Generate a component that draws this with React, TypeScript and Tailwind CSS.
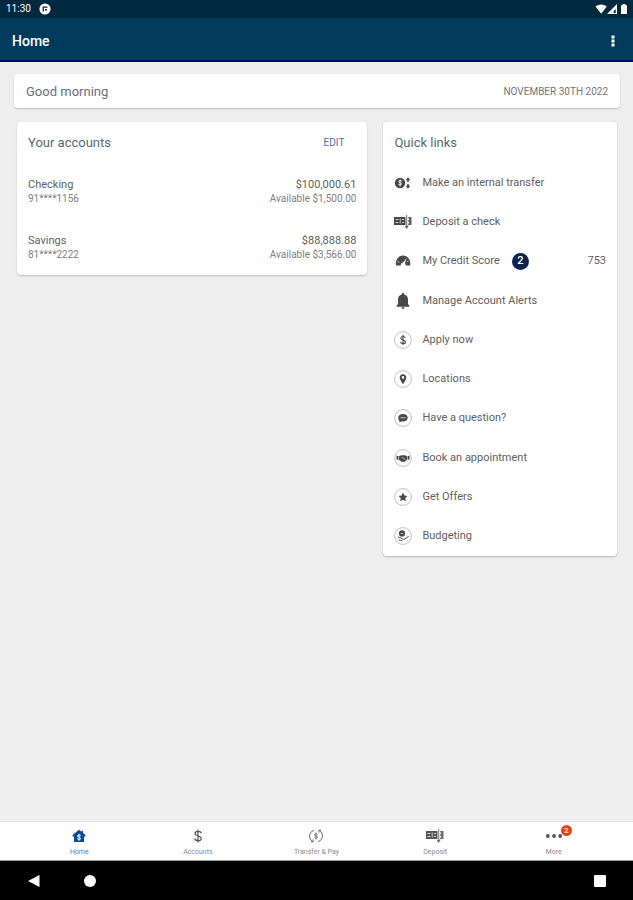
import React from "react";

type IconProps = { className?: string };

const CheckIcon = ({ className }: IconProps) => (
  <svg viewBox="0 0 18 14" className={className} fill="currentColor" aria-hidden="true">
    <path fillRule="evenodd" d="M0 2h11.500v8H0zM1.500 4.200v.8h3v-.8zM1.500 7v.8h3V7zM5.800 3.500v5h.7v-5zM8 4.200v.8h2v-.8zM8 7v.8h2V7z" />
    <path d="M12.300 0h.9v10.500h1.600L12.700 14l-2.100-3h1.700z" opacity="0.850" />
    <path d="M14.200 2H17.500v8h-3.300V8.500h.8V7H14.200V5H15V3.500h-.8z" opacity="0.850" />
  </svg>
);

const TransferIcon = ({ className }: IconProps) => (
  <svg viewBox="0 0 18 14" className={className} fill="currentColor" aria-hidden="true">
    <circle cx="6" cy="7" r="5.200" />
    <path d="M7.800 5.200C7 4.200 4.700 4.300 4.800 5.600c.1 1.300 2.700 1 2.700 2.300 0 1.200-2.400 1.200-3.200.2M6.100 3.500v7" fill="none" stroke="white" strokeWidth="0.900" />
    <path d="M14 1.200l2.400 3h-1.600v1.800h-1.600V4.200h-1.600zM14 12.800l-2.400-3h1.600V8h1.600v1.800h1.600z" />
  </svg>
);

const GaugeIcon = ({ className }: IconProps) => (
  <svg viewBox="0 0 18 14" className={className} fill="currentColor" aria-hidden="true">
    <path d="M2 11.500C1.200 6 4.300 1.500 9 1.500s8.200 4.500 7.200 10h-4.700c.3-1-.1-2-.7-2.500l2-5.300-3.700 4.700c-1.600.1-2.600 1.500-2.200 3.100z" />
    <path d="M3.500 7.500l2 .8M14.500 7l-1.800.9" stroke="white" strokeWidth="0.700" />
  </svg>
);

const BellIcon = ({ className }: IconProps) => (
  <svg viewBox="0 0 18 18" className={className} fill="currentColor" aria-hidden="true">
    <path d="M9 1c.9 0 1.300.6 1.300 1.500 2.400.6 3.700 2.400 3.700 5v4.500l1.500 2v.8h-13V14L4 12V7.500c0-2.600 1.300-4.400 3.700-5C7.700 1.600 8.100 1 9 1zM7.500 15.300h3c0 1-.5 1.600-1.500 1.600s-1.500-.6-1.500-1.600z" />
  </svg>
);

const dollarPath = "M11.400 6.700C10.700 5 6.800 5 6.800 7.200c0 2.300 4.700 1.300 4.700 3.700 0 2.300-4.400 2.100-5 .2M9 4v10";

const Ring = ({ children }: { children: React.ReactNode }) => (
  <svg viewBox="0 0 18 18" className="size-[18px]" fill="currentColor" aria-hidden="true">
    <circle cx="9" cy="9" r="8.400" fill="none" stroke="#b0b0b0" strokeWidth="0.800" />
    {children}
  </svg>
);

const links: { label: string; icon: React.ReactNode; badge?: string; value?: string }[] = [
  { label: "Make an internal transfer", icon: <TransferIcon className="h-3.5 w-[18px]" /> },
  { label: "Deposit a check", icon: <CheckIcon className="h-3.5 w-[18px]" /> },
  { label: "My Credit Score", icon: <GaugeIcon className="h-3.5 w-[18px]" />, badge: "2", value: "753" },
  { label: "Manage Account Alerts", icon: <BellIcon className="size-[18px]" /> },
  { label: "Apply now", icon: <Ring><path d={dollarPath} fill="none" stroke="currentColor" strokeWidth="1.100" /></Ring> },
  { label: "Locations", icon: <Ring><path fillRule="evenodd" d="M9 4.200c-2 0-3.300 1.400-3.300 3.200C5.700 9.600 9 14 9 14s3.300-4.400 3.300-6.600c0-1.800-1.300-3.200-3.300-3.200zm0 1.900a1.300 1.300 0 110 2.600 1.300 1.300 0 010-2.600z" /></Ring> },
  { label: "Have a question?", icon: <Ring><path d="M9 5c2.900 0 4.700 1.500 4.700 3.700S11.900 12.400 9 12.400H7.300L5.200 13.300l.2-1.700C4.600 11 4.300 10 4.300 8.700 4.300 6.500 6.100 5 9 5z" /><path d="M6.500 8.800h5" stroke="white" strokeWidth="0.700" /></Ring> },
  { label: "Book an appointment", icon: <Ring><path d="M2.500 6.500l2 .8L7.500 6.300h3.200l2.800 1 2-.8v4.300l-2-.2-2.700 2.200H7.500l-3-2.300-2 .2z" /><path d="M4.600 7.200v3.500M13.400 7.200v3.500M7.500 8.500l1.800.6 2.200 1.500" fill="none" stroke="white" strokeWidth="0.600" /></Ring> },
  { label: "Get Offers", icon: <Ring><path d="M9 4.600l1.400 2.900 3.100.4-2.300 2.200.6 3.200L9 11.800l-2.800 1.500.6-3.200-2.300-2.200 3.100-.4z" /></Ring> },
  { label: "Budgeting", icon: <Ring><circle cx="8" cy="6.400" r="3.100" /><path d="M6.700 6.400h2.600" stroke="white" strokeWidth="0.700" /><path d="M4 10.200c2.500-.2 3.500 1.600 6 2.200l4.600-3M4.500 12.800c1.500.2 2.500 1 4 1.200" fill="none" stroke="currentColor" strokeWidth="1" /></Ring> },
];

const accounts = [
  { name: "Checking", number: "91****1156", balance: "$100,000.61", available: "Available $1,500.00" },
  { name: "Savings", number: "81****2222", balance: "$88,888.88", available: "Available $3,566.00" },
];

const HomeIcon = () => (
  <svg viewBox="0 0 14 14" className="size-3.5" aria-hidden="true">
    <path d="M7 .8L.6 6v1.400H2V13h10V7.400h1.400V6L11 4V1.800H9.500v1z" fill="#0c4a93" />
    <path d="M8.800 6.600C8 5.600 5.500 5.700 5.500 7c0 1.500 3.200 1 3.200 2.500 0 1.400-2.700 1.300-3.400.1M7 5v6.800" fill="none" stroke="white" strokeWidth="1" />
  </svg>
);

const DollarIcon = () => (
  <svg viewBox="0 0 14 14" className="size-3.5" fill="none" stroke="currentColor" strokeWidth="1.200" aria-hidden="true">
    <path d="M10.300 4.300C9.700 1.700 4 1.700 4 4.600c0 3 6.300 1.700 6.300 4.900 0 3-6 2.700-6.600 0M7 .5v13" />
  </svg>
);

const CycleIcon = () => (
  <svg viewBox="0 0 14 14" className="size-3.5" fill="none" stroke="currentColor" strokeWidth="0.900" aria-hidden="true">
    <path d="M5 1.500C-.8 3-.5 10 3.600 12.500M1.800 12.800h2.300v-2.400M9 12.500c5.800-1.500 5.500-8.500 1.400-11M12.200 1.200H9.900v2.400" />
    <path d="M8.600 5.500C8 4.200 5.500 4.500 5.500 5.800c0 1.600 3.100.8 3.100 2.500 0 1.400-2.700 1.500-3.200.1M7 3.600v6.800" strokeWidth="0.800" />
  </svg>
);

const MoreIcon = () => (
  <svg viewBox="0 0 18 14" className="h-3.5 w-[18px]" fill="currentColor" aria-hidden="true">
    <circle cx="2.800" cy="7" r="1.900" />
    <circle cx="9" cy="7" r="1.900" />
    <circle cx="15.200" cy="7" r="1.900" />
  </svg>
);

const tabs = [
  { label: "Home", icon: <HomeIcon />, active: true },
  { label: "Accounts", icon: <DollarIcon /> },
  { label: "Transfer & Pay", icon: <CycleIcon /> },
  { label: "Deposit", icon: <CheckIcon className="h-3.5 w-[18px]" /> },
  { label: "More", icon: <MoreIcon />, badge: "2" },
];

export default function App() {
  return (
    <div className="flex min-h-screen flex-col bg-[#eeeeee] font-[Roboto,sans-serif] text-[#606060]">
      <div className="flex h-[18px] items-center justify-between bg-[#00283f] pr-1 pl-1.5 text-white">
        <div className="flex items-center gap-2">
          <span className="text-[10px] leading-3">11:30</span>
          <svg viewBox="0 0 12 12" className="size-3" aria-hidden="true">
            <circle cx="6" cy="6" r="5.600" fill="white" />
            <path d="M4.300 8.500V4.200h4.200" fill="none" stroke="#00283f" strokeWidth="1.300" />
            <path d="M6 6h2v1.500H6z" fill="#00283f" />
          </svg>
        </div>
        <svg viewBox="0 0 34 12" className="h-3 w-[34px]" fill="white" aria-hidden="true">
          <path d="M.5 3.500C3.500.8 8.800.8 11.800 3.500L6.200 10.800z" />
          <path fillRule="evenodd" d="M22 1v10H12zM20.700 6l-2 2v2h2z" />
          <path d="M27.500 1h3v1.200H32V11h-6V2.200h1.500z" />
        </svg>
      </div>

      <header className="flex h-11 items-center justify-between border-b-2 border-[#020a4c] bg-[#003a5d] px-3 pt-1 text-white">
        <h1 className="text-[14px] leading-4 font-medium">Home</h1>
        <button type="button" aria-label="Options" className="flex h-6 w-4 items-center justify-center">
          <svg viewBox="0 0 4 12" className="h-3 w-1" fill="white" aria-hidden="true">
            <path d="M.5.500h3v3h-3zM.5 4.500h3v3h-3zM.5 8.500h3v3h-3z" />
          </svg>
        </button>
      </header>

      <main className="flex-1 pt-3 pr-[13px] pl-3.5">
        <section className="flex h-[34px] items-center justify-between rounded-sm bg-white px-3 pt-0.5 shadow-[0_1px_2px_rgba(0,0,0,0.2)]">
          <h2 className="text-[13px] leading-4 text-[#64707a]">Good morning</h2>
          <p className="text-[10px] leading-3 text-[#757575]">NOVEMBER 30TH 2022</p>
        </section>

        <div className="mt-3.5 grid grid-cols-[3fr_2fr] items-start gap-4 px-[3px]">
          <section className="rounded-sm bg-white px-[11px] pb-3.5 shadow-[0_1px_2px_rgba(0,0,0,0.2)]">
            <div className="flex h-[42px] items-center justify-between pr-3">
              <h2 className="text-[13px] leading-4 text-[#566878]">Your accounts</h2>
              <button type="button" className="text-[10px] leading-3 text-[#4a6dab]">EDIT</button>
            </div>
            <ul className="flex flex-col gap-7 pt-[13px]">
              {accounts.map((a) => (
                <li key={a.name} className="flex justify-between">
                  <div>
                    <p className="text-[11px] leading-4">{a.name}</p>
                    <p className="text-[10px] leading-3 text-[#808080]">{a.number}</p>
                  </div>
                  <div className="text-right">
                    <p className="text-[11px] leading-4">{a.balance}</p>
                    <p className="text-[10px] leading-3 text-[#808080]">{a.available}</p>
                  </div>
                </li>
              ))}
            </ul>
          </section>

          <section className="rounded-sm bg-white px-[11px] shadow-[0_1px_2px_rgba(0,0,0,0.25)]">
            <h2 className="pt-[13px] pb-3 text-[13px] leading-4 text-[#566878]">Quick links</h2>
            <ul className="grid h-[393px] auto-rows-fr">
              {links.map((l) => (
                <li key={l.label}>
                  <a href="#" className="flex h-full items-center">
                    <span className="mr-2.5 flex w-[18px] justify-center text-[#484848]">{l.icon}</span>
                    <span className="text-[11px] leading-4">{l.label}</span>
                    {l.badge && (
                      <span className="ml-3 flex size-[17px] items-center justify-center rounded-full bg-[#0a2450] text-[11px] leading-4 font-medium text-white">
                        {l.badge}
                      </span>
                    )}
                    {l.value && <span className="ml-auto text-[11px] leading-4">{l.value}</span>}
                  </a>
                </li>
              ))}
            </ul>
          </section>
        </div>
      </main>

      <nav className="flex h-10 border-t border-b border-t-[#e2e2e2] border-b-[#999999] bg-white px-5">
        {tabs.map((t) => (
          <a
            key={t.label}
            href="#"
            className={`flex flex-1 flex-col items-center gap-[5px] pt-[7px] ${t.active ? "text-[#5580b2]" : "text-[#555555]"}`}
          >
            <span className="relative">
              {t.icon}
              {t.badge && (
                <span className="absolute -top-1 left-4 flex size-[11px] items-center justify-center rounded-full bg-[#f0400f] text-[8px] leading-none font-medium text-white">
                  {t.badge}
                </span>
              )}
            </span>
            <span className={`text-[7px] leading-2 ${t.active ? "" : "text-[#8a8a8a]"}`}>{t.label}</span>
          </a>
        ))}
      </nav>

      <div className="flex h-[39px] items-center justify-between bg-black px-[27px]">
        <div className="flex items-center gap-11">
          <button type="button" aria-label="Back">
            <svg viewBox="0 0 13 14" className="h-3.5 w-[13px]" fill="white" aria-hidden="true"><path d="M12.500 1v12L1 7z" /></svg>
          </button>
          <button type="button" aria-label="Home screen" className="size-3 rounded-full bg-white" />
        </div>
        <button type="button" aria-label="Recent apps" className="size-3 rounded-[1px] bg-white" />
      </div>
    </div>
  );
}
